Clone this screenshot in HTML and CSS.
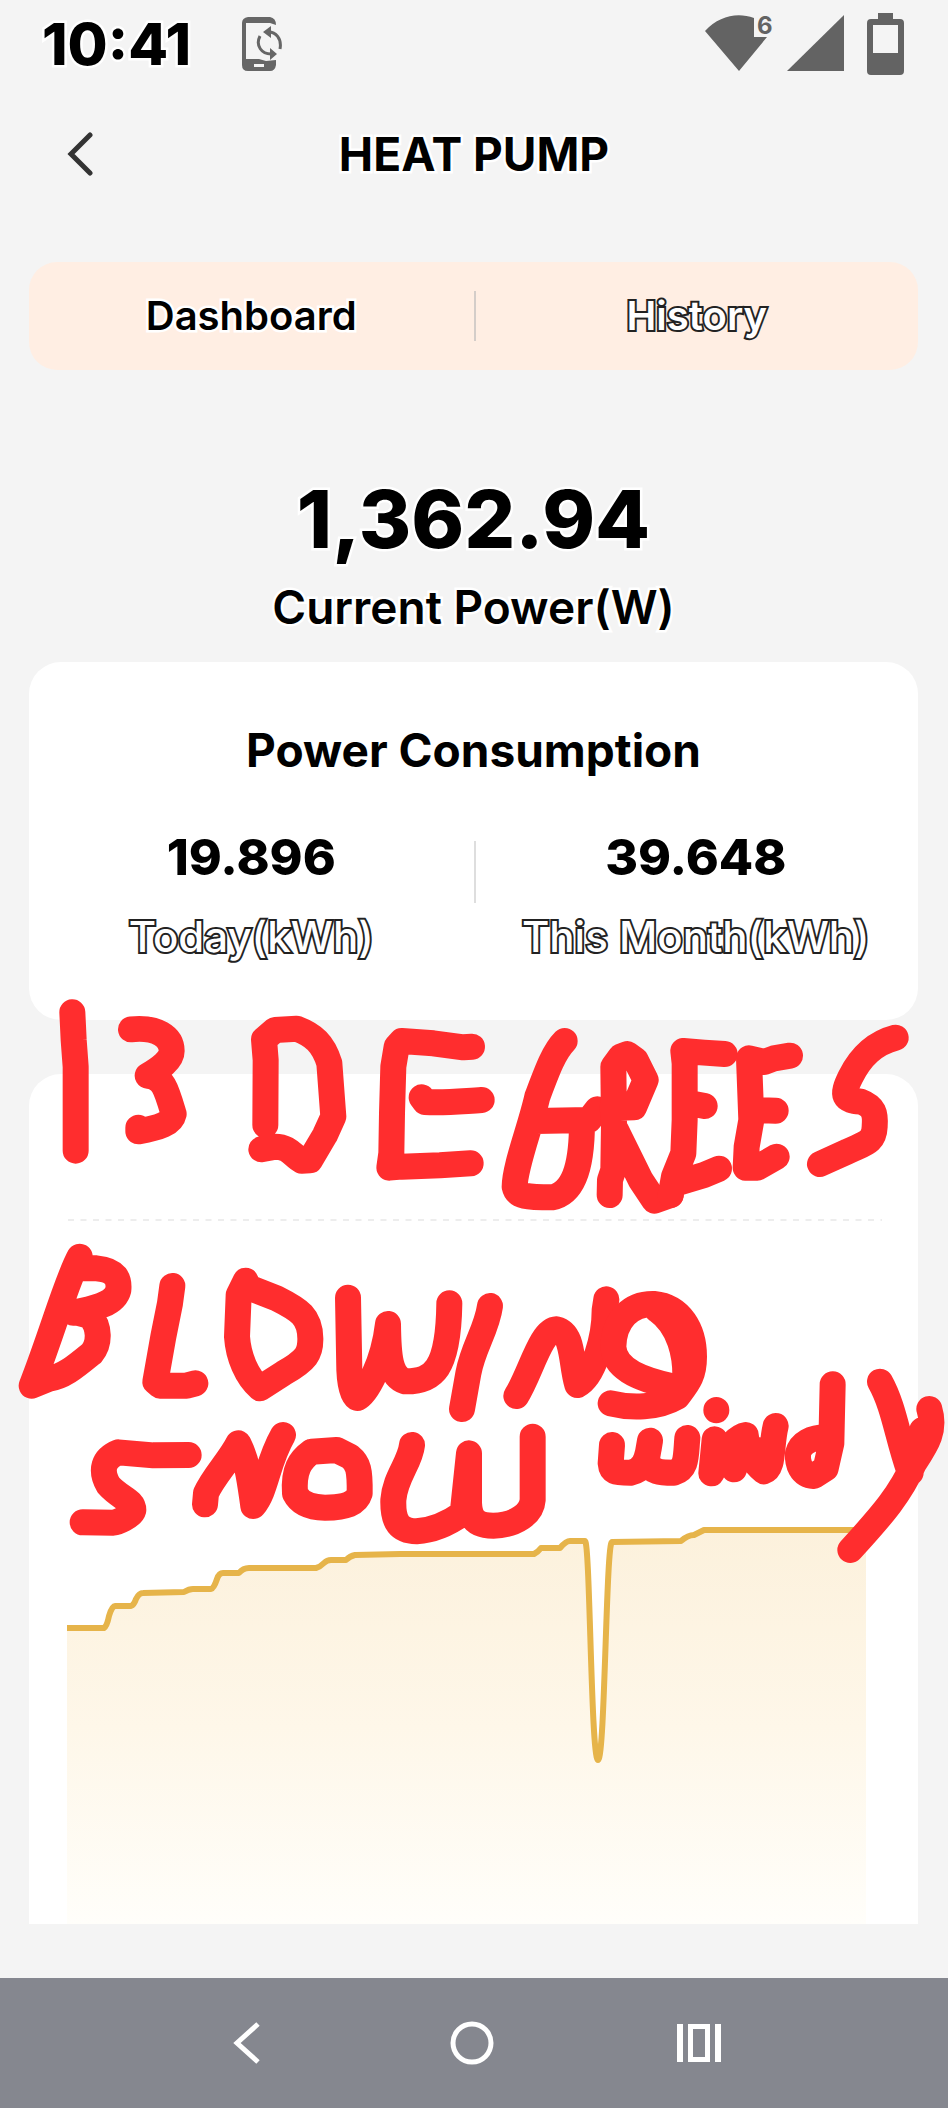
FILE: index.html
```html
<!DOCTYPE html>
<html lang="en">
<head>
<meta charset="utf-8">
<meta name="viewport" content="width=device-width, initial-scale=1">
<title>Heat Pump</title>
<link rel="stylesheet" href="styles.css">
</head>
<body>
<div class="screen">
  <div class="status-bar">
    <span class="clock">10:41</span>
    <svg class="sync-icon" width="42" height="56" viewBox="0 0 42 56" aria-hidden="true">
      <path fill="#666" fill-rule="evenodd" d="M7 1H29Q35 2 35 9L29 7H5V43H18L25 45L35 44V49Q34 55 29 55H7Q1 55 1 49V7Q1 2 7 1ZM13 48V51H23V48Z"/>
      <path fill="none" stroke="#666" stroke-width="3" d="M26 16C35 15 41 23 39 33M19 20C14 30 21 38 30 38"/>
      <path fill="#666" d="M22 16L30 10V22ZM36 38L29 32V44Z"/>
    </svg>
    <div class="status-icons">
      <svg width="72" height="76" viewBox="0 -8 72 76" aria-hidden="true">
        <path fill="#636363" d="M0 17C14 2 32 -2 49 4V23H62L34 57Z"/>
        <text class="wifi-generation" x="52" y="20">6</text>
      </svg>
      <svg width="57" height="60" viewBox="0 0 57 60" aria-hidden="true"><path fill="#636363" d="M57 1V57H0Z"/></svg>
      <svg class="battery" width="37" height="62" viewBox="0 0 37 62" aria-hidden="true"><path fill="#636363" fill-rule="evenodd" d="M11 0H26V6H33Q37 6 37 10V58Q37 62 33 62H4Q0 62 0 58V10Q0 6 4 6H11ZM6 12V40H31V12Z"/></svg>
    </div>
  </div>

  <header class="header">
    <button class="back" type="button" aria-label="Back">
      <svg width="26" height="44" viewBox="0 0 26 44" aria-hidden="true"><path d="M23 3L4 22L23 41" fill="none" stroke="#333" stroke-width="5" stroke-linecap="round"/></svg>
    </button>
    <h1 class="title">HEAT PUMP</h1>
  </header>

  <main class="content">
    <nav class="tabs">
      <a class="tab" href="#dashboard" aria-current="page">Dashboard</a>
      <a class="tab outlined" href="#history">History</a>
    </nav>

    <section class="reading">
      <div class="reading-value">1,362.94</div>
      <div class="reading-label">Current Power(W)</div>
    </section>

    <section class="card consumption">
      <h2 class="card-title">Power Consumption</h2>
      <dl class="totals">
        <div class="total"><dd class="total-value">19.896</dd><dt class="total-label outlined">Today(kWh)</dt></div>
        <div class="total"><dd class="total-value">39.648</dd><dt class="total-label outlined">This Month(kWh)</dt></div>
      </dl>
    </section>

    <section class="card chart-card">
      <svg class="chart" viewBox="29 1074 889 850" role="img" aria-label="Power history">
        <defs>
          <linearGradient id="area" x1="0" y1="0" x2="0" y2="1">
            <stop offset="0" stop-color="#fcf1dc"/>
            <stop offset=".5" stop-color="#fef7e9"/>
            <stop offset="1" stop-color="#fffefa"/>
          </linearGradient>
        </defs>
        <path d="M68 1220H882" stroke="#ededed" stroke-width="2" stroke-dasharray="6 6.5"/>
        <path fill="url(#area)" d="M67 1628H104Q107 1626 109 1616Q112 1606 115 1606H131Q134 1605 136 1599Q139 1593 143 1593L184 1592Q189 1589 193 1589H211Q214 1588 217 1579Q219 1573 223 1573H239Q243 1568 249 1568H316Q320 1567 324 1563Q327 1560 331 1560H346Q350 1556 355 1555L400 1554H534Q538 1552 541 1548H560Q566 1541 570 1541H585C590 1541 590 1762 598 1762C606 1762 606 1542 612 1542L681 1541Q688 1535 694 1535L704 1530H866V1924H67Z"/>
        <path fill="none" stroke="#e6b44a" stroke-width="6" stroke-linejoin="round" d="M67 1628H104Q107 1626 109 1616Q112 1606 115 1606H131Q134 1605 136 1599Q139 1593 143 1593L184 1592Q189 1589 193 1589H211Q214 1588 217 1579Q219 1573 223 1573H239Q243 1568 249 1568H316Q320 1567 324 1563Q327 1560 331 1560H346Q350 1556 355 1555L400 1554H534Q538 1552 541 1548H560Q566 1541 570 1541H585C590 1541 591 1760 598 1760C605 1760 606 1542 612 1542L681 1541Q688 1535 694 1535L704 1530H866"/>
      </svg>
    </section>
  </main>

  <div class="system-nav">
    <button type="button" aria-label="System back"><svg width="30" height="44" viewBox="0 0 30 44" aria-hidden="true"><path d="M27 3L6 22L27 41" fill="none" stroke="#fff" stroke-width="5"/></svg></button>
    <button type="button" aria-label="Home"><svg width="44" height="44" viewBox="0 0 44 44" aria-hidden="true"><circle cx="22" cy="22" r="19" fill="none" stroke="#fff" stroke-width="5"/></svg></button>
    <button type="button" aria-label="Recent apps"><svg width="44" height="40" viewBox="0 0 44 40" aria-hidden="true"><path fill="#fff" fill-rule="evenodd" d="M0 1H6V39H0ZM11 1H33V39H11ZM16 6V34H28V6ZM38 1H44V39H38Z"/></svg></button>
  </div>

  <!-- Freehand marker strokes over the dashboard -->
  <svg class="marker" viewBox="0 0 2844 6324" role="img" aria-label="13 degrees, blowing snow, windy">
    <g transform="translate(0 2940)">
      <path d="M217 97L221 180L227 260V512"/>
      <path d="M393 148C470 140 515 170 515 213C515 240 480 265 443 287C490 290 500 330 521 402C515 430 480 443 415 454V443"/>
      <path d="M796 435L797 240L792 178L825 150L890 146C940 165 970 190 988 250L1000 410L975 465L930 541L905 542C880 530 870 500 825 500L784 508"/>
      <path d="M1445 360C1380 364 1330 370 1275 366L1265 352M1416 200L1390 202L1300 190L1205 183L1190 200L1180 260L1176 400L1174 520L1168 563L1205 560L1320 556L1412 550"/>
    </g>
    <g transform="translate(1422 2940)">
      <path d="M272 183C240 215 220 270 190 350C170 440 122 560 122 620C128 650 160 652 235 652C290 640 324 580 324 425M185 423L345 420L370 388"/>
      <path d="M407 645L408 600L418 570L420 430L418 260L440 230L460 222L485 240L515 300L480 382L415 384M426 450L500 600L541 662L590 645"/>
      <path d="M590 645L600 590L628 520L632 420V250L628 213L690 218L752 222M640 368L692 378M600 612L690 585L735 566"/>
      <path d="M948 227L900 235L870 246L825 235L832 420L818 500L815 563L850 563L908 530M845 390L905 392"/>
      <path d="M1265 173C1200 190 1160 230 1130 290C1100 350 1110 360 1160 365C1200 380 1205 400 1202 440C1200 490 1170 490 1120 515L1038 552"/>
    </g>
    <g transform="translate(0 3690)">
      <path d="M239 80C200 150 160 300 95 467L145 447C190 440 220 415 275 370C300 340 300 290 270 258L200 240M239 115L290 115C350 120 358 150 355 180C345 220 290 235 220 248"/>
      <path d="M517 168L510 220L490 320L466 455L480 467H560L586 460"/>
      <path d="M745 172L830 205C900 240 930 260 931 325C932 370 920 390 850 430L780 475C740 440 715 380 711 320L716 195L737 152"/>
      <path d="M1044 203L1048 420C1050 470 1060 500 1072 504C1100 490 1150 400 1164 282C1165 380 1170 440 1215 454C1300 455 1345 420 1348 220"/>
      <path d="M1470 228C1460 300 1420 350 1405 430L1386 537"/>
      <path d="M566 675L460 676L355 667C310 685 300 720 325 765C360 805 400 810 400 840C395 860 350 877 340 878L248 877"/>
      <path d="M615 823L618 790C640 740 690 690 715 640C745 700 750 760 760 828C800 780 800 700 849 615"/>
      <path d="M935 665C900 690 880 720 885 790C900 820 930 832 975 833C1040 832 1070 820 1079 790C1080 720 1075 700 1050 680L1010 660L935 665"/>
      <path d="M1236 645C1230 700 1185 740 1180 810C1178 880 1200 903 1250 904C1310 900 1360 870 1388 850L1407 670V820C1410 870 1430 887 1480 887C1550 885 1595 850 1598 810V620"/>
    </g>
    <g transform="translate(1422 3690)">
      <path d="M127 498C170 430 200 300 248 298C300 310 290 400 310 465C360 440 392 320 392 240L397 208"/>
      <path d="M550 240L540 222C470 220 420 270 418 350C420 410 480 445 600 470M540 222C620 230 660 300 660 380C660 440 640 460 610 500C550 535 470 535 410 520M550 240C620 290 635 380 634 440"/>
      <path d="M414 645L410 700C412 725 420 728 470 728C510 720 520 690 528 632L518 690C530 728 560 728 600 728C640 715 635 680 640 624"/>
      <path d="M727 540V541M722 628L712 730C740 680 780 620 815 615C820 660 840 700 870 724C900 715 890 650 905 588M780 718L750 660L800 650L850 660"/>
      <path d="M1076 463L1072 640L1055 715L1020 738C980 735 970 700 972 670C980 640 1010 622 1060 622"/>
      <path d="M1218 455C1260 530 1270 620 1305 720L1310 728M1366 537C1385 600 1360 640 1320 700C1280 790 1230 850 1129 960M1345 600L1310 710"/>
    </g>
  </svg>
</div>
</body>
</html>
```
FILE: styles.css
```css
* { box-sizing: border-box; }
body {
  margin: 0;
  background: #f4f4f4;
  color: #000;
  font-family: Inter, "Liberation Sans", sans-serif;
}
button { padding: 0; border: 0; background: none; }
svg { display: block; }
h1, h2, dl, dd { margin: 0; }
.screen {
  position: relative;
  display: flex;
  flex-direction: column;
  min-height: 100vh;
  overflow: hidden;
}
.status-bar {
  display: flex;
  align-items: center;
  height: 88px;
  padding: 0 44px 0 42px;
}
.clock {
  font-size: 58px;
  line-height: 64px;
  font-weight: 800;
}
.clock, .title, .tab, .reading {
  -webkit-text-stroke: 5px #fff;
  paint-order: stroke fill;
}
.sync-icon { margin-left: 50px; }
.status-icons {
  display: flex;
  align-items: center;
  gap: 10px;
  margin-left: auto;
}
.battery { margin-left: 13px; }
.wifi-generation {
  fill: #636363;
  font-size: 24px;
  font-weight: 700;
}
.header {
  display: grid;
  grid-template-columns: 26px 1fr 26px;
  align-items: center;
  height: 132px;
  padding: 0 67px;
}
.title {
  font-size: 46px;
  line-height: 56px;
  font-weight: 700;
  text-align: center;
}
.content {
  display: flex;
  flex-direction: column;
  flex: 1;
  padding: 42px 30px 54px 29px;
}
.tabs {
  display: grid;
  grid-template-columns: 1fr 1fr;
  align-items: center;
  height: 108px;
  border-radius: 28px;
  background: #ffeee3;
}
.tab {
  font-size: 40px;
  line-height: 50px;
  font-weight: 600;
  color: #000;
  text-align: center;
  text-decoration: none;
}
.tab + .tab { border-left: 2px solid #d4cdc9; }
.tab.outlined, .outlined {
  color: #fff;
  -webkit-text-stroke: 4px #222;
  paint-order: stroke fill;
}
.reading {
  padding: 101px 0 27px;
  text-align: center;
}
.reading-value {
  font-size: 80px;
  line-height: 96px;
  font-weight: 800;
}
.reading-label {
  margin-top: 12px;
  font-size: 46px;
  line-height: 56px;
  font-weight: 600;
}
.card {
  border-radius: 32px;
  background: #fff;
}
.consumption { padding: 64px 0 59px; }
.card-title {
  font-size: 46px;
  line-height: 48px;
  font-weight: 700;
  text-align: center;
}
.totals {
  position: relative;
  display: grid;
  grid-template-columns: 1fr 1fr;
  margin-top: 55px;
}
.totals::after {
  content: "";
  position: absolute;
  top: 12px;
  left: 50%;
  width: 2px;
  height: 62px;
  background: #dedede;
}
.total {
  display: flex;
  flex-direction: column;
  gap: 28px;
  text-align: center;
}
.total-value {
  font-size: 50px;
  line-height: 56px;
  font-weight: 800;
}
.total-label {
  font-size: 42px;
  line-height: 48px;
  font-weight: 500;
}
.chart-card {
  margin-top: 54px;
  border-radius: 32px 32px 0 0;
}
.chart {
  width: 100%;
  height: auto;
}
.system-nav {
  display: grid;
  grid-template-columns: 1fr 1fr 1fr;
  align-items: center;
  height: 130px;
  padding: 0 136px 0 133px;
  background: #85878f;
}
.system-nav button {
  display: flex;
  justify-content: center;
}
.marker {
  position: absolute;
  top: 0;
  left: 0;
  width: 100%;
  pointer-events: none;
  fill: none;
  stroke: #ff2d2e;
  stroke-width: 78;
  stroke-linecap: round;
  stroke-linejoin: round;
}
```
